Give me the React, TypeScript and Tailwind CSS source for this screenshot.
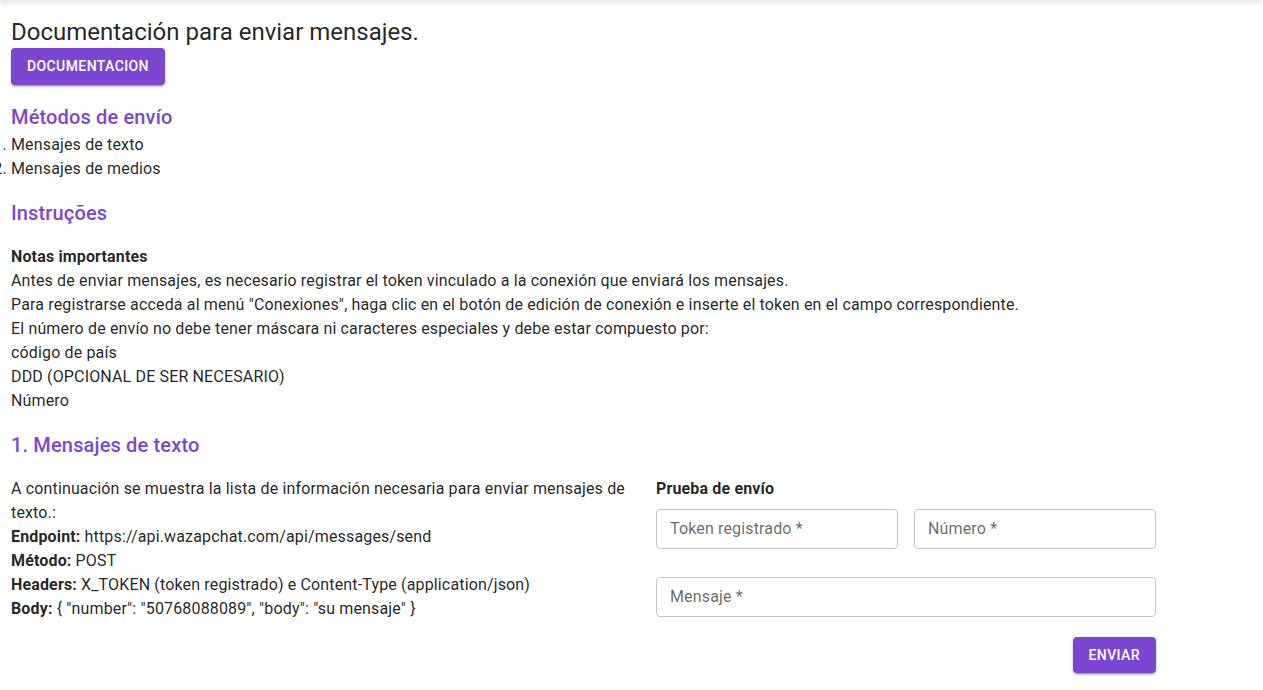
import React from "react";

const purple = "text-[#7b47d2]";

export default function App() {
  return (
    <div className="min-h-[690px] bg-white text-[rgba(0,0,0,0.87)] font-['Roboto','Liberation_Sans',sans-serif]">
      <div className="h-0 shadow-[0_1px_5px_1px_rgba(0,0,0,0.25)]" />
      <div className="px-[11px] tracking-[0.15px]">
        <h1 className="pt-4 text-[24px] leading-[32px] font-normal tracking-normal">Documentación para enviar mensajes.</h1>
        <button className="h-[37px] px-4 rounded bg-[#7b47d2] text-white text-[14px] font-medium uppercase tracking-[0.4px] shadow-[0_3px_1px_-2px_rgba(0,0,0,0.2),0_2px_2px_0_rgba(0,0,0,0.14),0_1px_5px_0_rgba(0,0,0,0.12)]">
          Documentacion
        </button>

        <h2 className={`mt-4 text-[20px] leading-[32px] font-medium ${purple}`}>Métodos de envío</h2>
        <ol className="list-decimal pl-0 text-[16px] leading-[24px]">
          <li>Mensajes de texto</li>
          <li>Mensajes de medios</li>
        </ol>

        <h2 className={`mt-4 text-[20px] leading-[32px] font-medium ${purple}`}>Instruções</h2>
        <div className="mt-4 text-[16px] leading-[24px]">
          <p className="font-bold">Notas importantes</p>
          <p>Antes de enviar mensajes, es necesario registrar el token vinculado a la conexión que enviará los mensajes.</p>
          <p>Para registrarse acceda al menú "Conexiones", haga clic en el botón de edición de conexión e inserte el token en el campo correspondiente.</p>
          <p>El número de envío no debe tener máscara ni caracteres especiales y debe estar compuesto por:</p>
          <p>código de país</p>
          <p>DDD (OPCIONAL DE SER NECESARIO)</p>
          <p>Número</p>
        </div>

        <h2 className={`mt-4 text-[20px] leading-[32px] font-medium ${purple}`}>1. Mensajes de texto</h2>

        <div className="mt-4 flex">
          <div className="w-[630px] shrink-0 text-[16px] leading-[24px]">
            <p>A continuación se muestra la lista de información necesaria para enviar mensajes de texto.:</p>
            <p><b>Endpoint:</b> https://api.wazapchat.com/api/messages/send</p>
            <p><b>Método:</b> POST</p>
            <p><b>Headers:</b> X_TOKEN (token registrado) e Content-Type (application/json)</p>
            <p><b>Body:</b> {'{ "number": "50768088089", "body": "su mensaje" }'}</p>
          </div>
          <div className="ml-[15px] w-[500px] flex flex-col">
            <p className="text-[16px] leading-[24px] font-bold">Prueba de envío</p>
            <div className="mt-2 flex gap-4">
              <div className="flex-1 h-[40px] rounded border border-[#c4c4c4] flex items-center px-[13px] text-[16px] text-[rgba(0,0,0,0.6)]">Token registrado *</div>
              <div className="flex-1 h-[40px] rounded border border-[#c4c4c4] flex items-center px-[13px] text-[16px] text-[rgba(0,0,0,0.6)]">Número *</div>
            </div>
            <div className="mt-[28px] h-[40px] rounded border border-[#c4c4c4] flex items-center px-[13px] text-[16px] text-[rgba(0,0,0,0.6)]">Mensaje *</div>
            <div className="mt-5 flex justify-end">
              <button className="h-[36px] px-4 rounded bg-[#7b47d2] text-white text-[14px] font-medium uppercase tracking-[0.4px] shadow-[0_3px_1px_-2px_rgba(0,0,0,0.2),0_2px_2px_0_rgba(0,0,0,0.14),0_1px_5px_0_rgba(0,0,0,0.12)]">
                Enviar
              </button>
            </div>
          </div>
        </div>
      </div>
    </div>
  );
}
